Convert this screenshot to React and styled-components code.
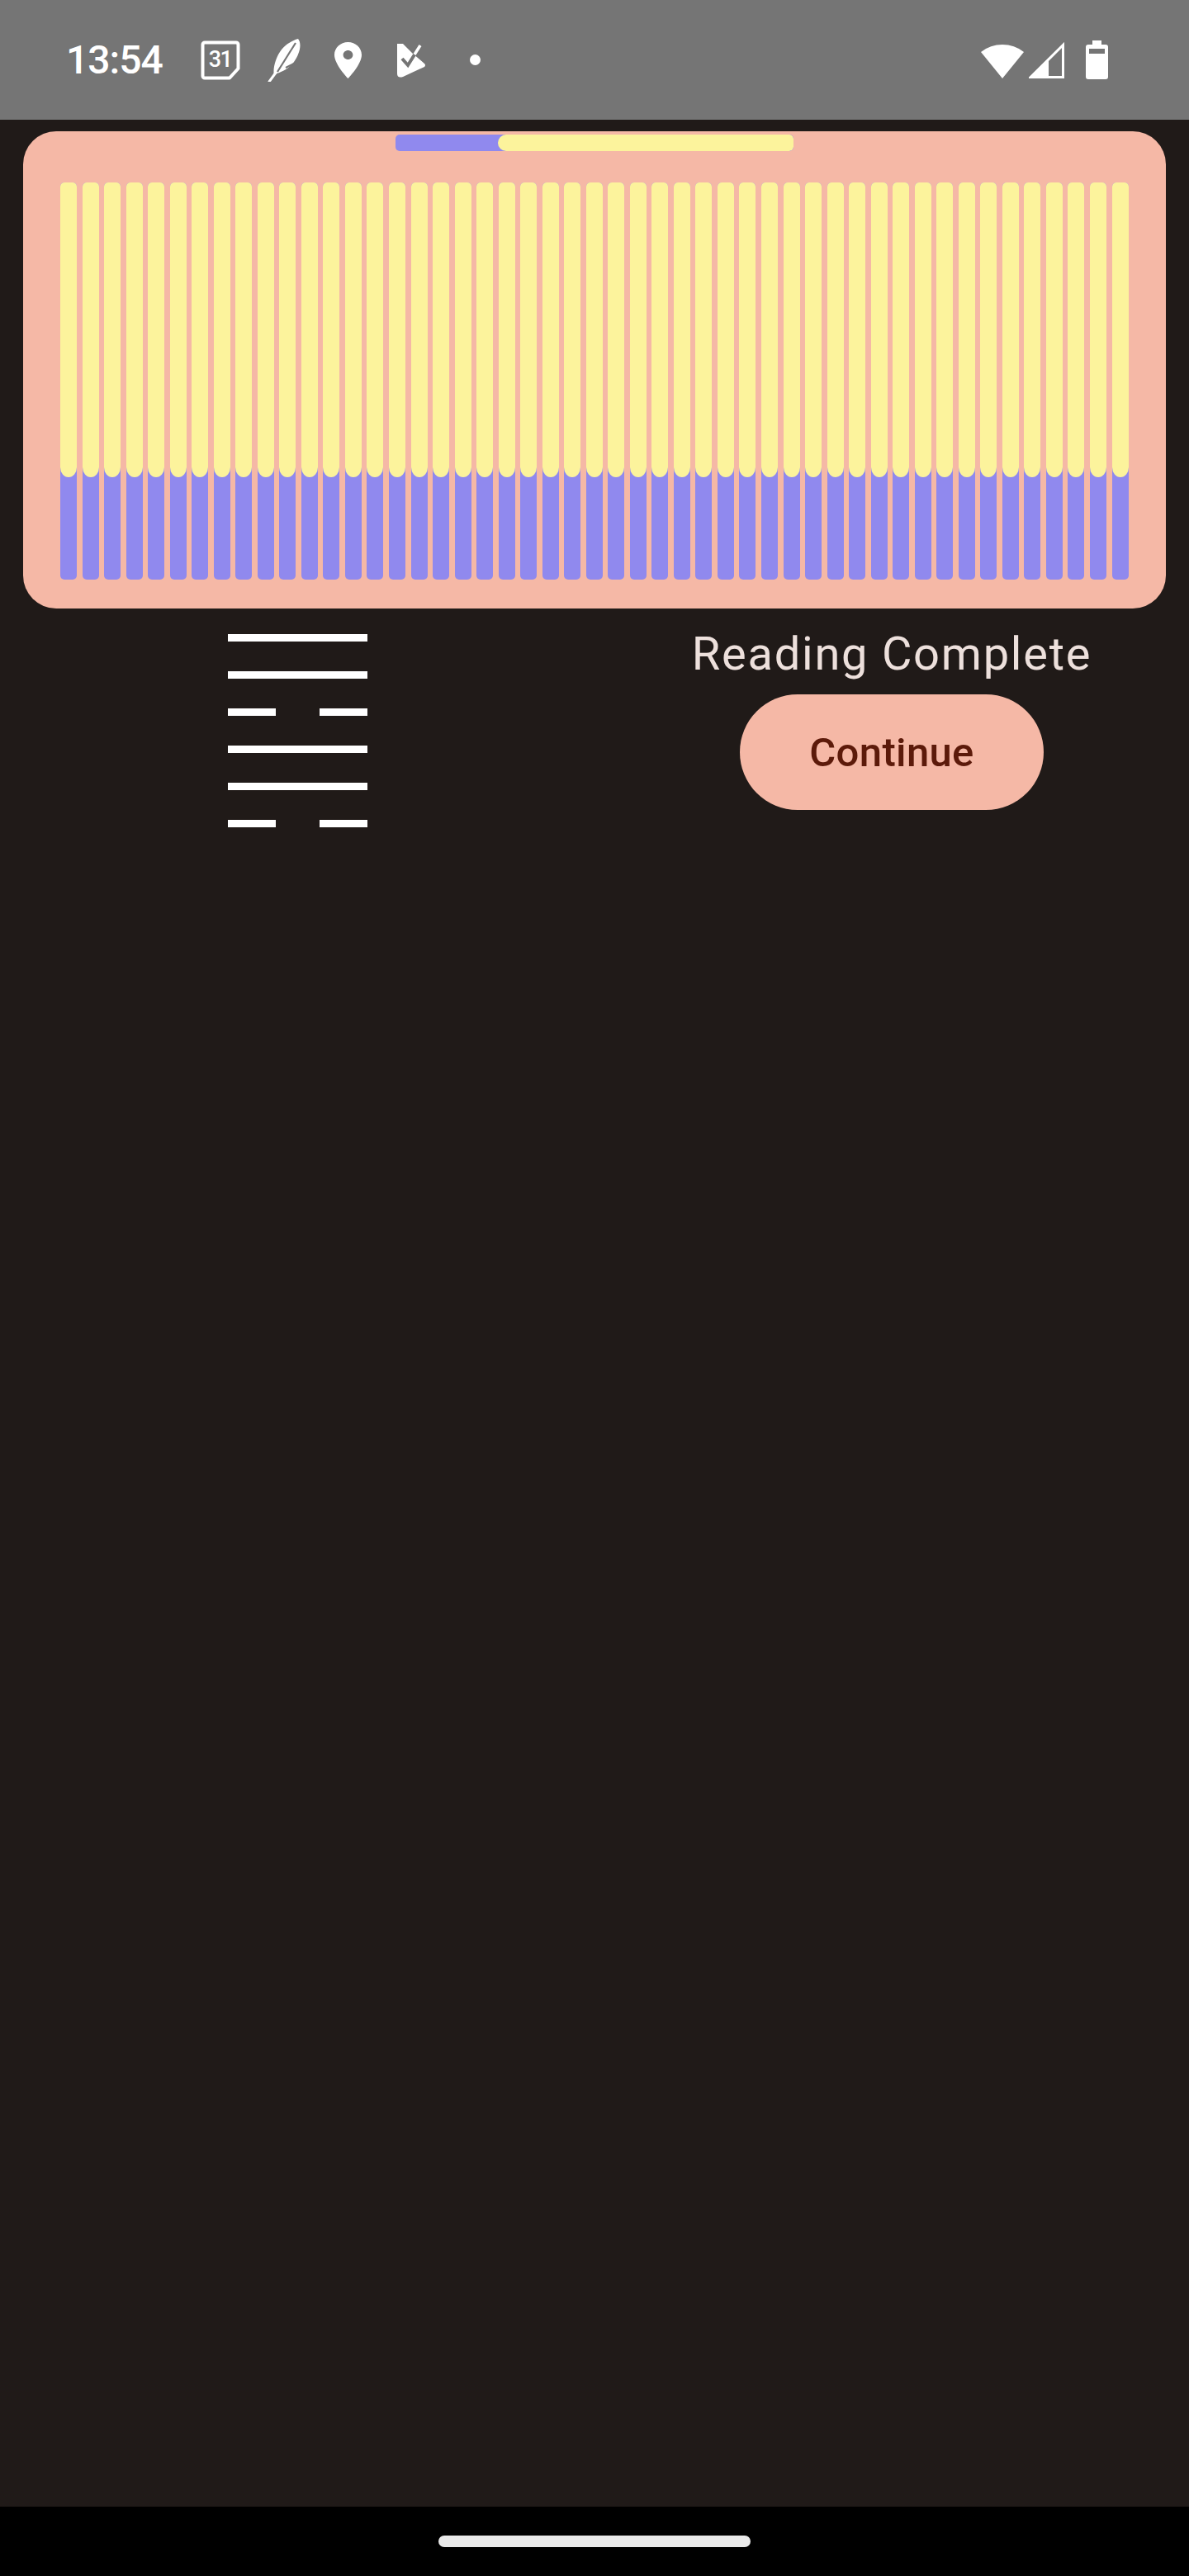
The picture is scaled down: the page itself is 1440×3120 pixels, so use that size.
import React from "react";
import styled, { createGlobalStyle } from "styled-components";

const colors = {
  statusBg: "#757575",
  page: "#201A18",
  card: "#F5B8A6",
  yellow: "#FCF39C",
  purple: "#9089EE",
  onSurface: "#EDE0DC",
  onPrimary: "#5C1A0A",
};

const GlobalStyle = createGlobalStyle`
  html, body {
    margin: 0;
    padding: 0;
    background: ${colors.page};
    font-family: Roboto, "Liberation Sans", sans-serif;
  }
  * {
    box-sizing: border-box;
  }
`;

const Screen = styled.div`
  display: flex;
  flex-direction: column;
  min-height: 100vh;
  background: ${colors.page};
`;

/* ---------- status bar ---------- */

const StatusBar = styled.div`
  display: flex;
  align-items: center;
  justify-content: space-between;
  height: 145px;
  padding: 0 98px 0 80px;
  background: ${colors.statusBg};
  color: #fff;
`;

const StatusLeft = styled.div`
  display: flex;
  align-items: center;
`;

const Clock = styled.span`
  font-size: 48px;
  font-weight: 500;
  line-height: 1;
  margin-right: 32px;
  letter-spacing: -1px;
`;

const NotifSlot = styled.div`
  display: flex;
  align-items: center;
  justify-content: center;
  width: 77px;
`;

const Dot = styled.span`
  width: 13px;
  height: 13px;
  border-radius: 50%;
  background: #fff;
`;

const StatusRight = styled.div`
  display: flex;
  align-items: center;
  gap: ${({ $gap }) => $gap || 0}px;
`;

const CalendarIcon = () => (
  <svg width="48" height="48" viewBox="0 0 48 48">
    <path
      d="M5 2.5 H43 a2.5 2.5 0 0 1 2.5 2.5 V34 L35 45.5 H5 a2.5 2.5 0 0 1 -2.5 -2.5 V5 a2.5 2.5 0 0 1 2.5 -2.5 Z"
      fill="none"
      stroke="#fff"
      strokeWidth="4"
      strokeLinejoin="round"
    />
    <text
      x="23.5"
      y="32"
      textAnchor="middle"
      fill="#fff"
      fontSize="27"
      fontWeight="500"
      fontFamily="Roboto, sans-serif"
      letterSpacing="-1.5"
    >
      31
    </text>
  </svg>
);

const FeatherIcon = () => (
  <svg width="42" height="52" viewBox="0 0 42 52">
    <path
      d="M38 0 C43 6 40 18 33 28 C27 36 19 40 12 42 L9 45 C7 36 11 22 18 13 C24 6 31 2 38 0 Z"
      fill="#fff"
    />
    <path d="M35 5 L13 40" stroke={colors.statusBg} strokeWidth="2.2" />
    <path d="M23 35 L33 30" stroke={colors.statusBg} strokeWidth="2" />
    <path d="M11 41 L3 52" stroke="#fff" strokeWidth="3" strokeLinecap="round" />
  </svg>
);

const PinIcon = () => (
  <svg width="33" height="44" viewBox="5 2 14 20" preserveAspectRatio="none">
    <path
      d="M12 2C8.13 2 5 5.13 5 9c0 5.25 7 13 7 13s7-7.75 7-13c0-3.87-3.13-7-7-7zm0 9.5c-1.38 0-2.5-1.12-2.5-2.5s1.12-2.5 2.5-2.5 2.5 1.12 2.5 2.5-1.12 2.5-2.5 2.5z"
      fill="#fff"
    />
  </svg>
);

const TaskIcon = () => (
  <svg width="40" height="44" viewBox="0 0 40 44">
    <path
      d="M3 2 H10 L22 14 L36 26 Q38 28 36 30 L10 42 Q3 44 3 38 Z"
      fill="#fff"
    />
    <path
      d="M9 20 L16 28 L31 4"
      fill="none"
      stroke={colors.statusBg}
      strokeWidth="4"
    />
    <path d="M24 15 L31 4" stroke="#fff" strokeWidth="3.5" />
  </svg>
);

const WifiIcon = () => (
  <svg width="54" height="44" viewBox="0 0 54 44">
    <path d="M1 12 A42 42 0 0 1 53 12 L27 44 Z" fill="#fff" />
  </svg>
);

const SignalIcon = () => (
  <svg width="43" height="44" viewBox="0 0 43 44">
    <path d="M0 44 L24 44 L24 19.4 Z" fill="#fff" />
    <path
      d="M2 42.6 L41.5 42.6 L41.5 3.5 Z"
      fill="none"
      stroke="#fff"
      strokeWidth="3"
    />
  </svg>
);

const BatteryIcon = () => (
  <svg width="27" height="47" viewBox="0 0 27 47">
    <rect x="8" y="0" width="11" height="6" fill="#fff" />
    <rect x="0" y="5" width="27" height="42" rx="3" fill="#fff" />
    <rect x="4" y="10" width="19" height="6" fill={colors.statusBg} />
  </svg>
);

/* ---------- main content ---------- */

const Content = styled.main`
  flex: 1;
  display: flex;
  flex-direction: column;
`;

const Card = styled.section`
  display: flex;
  flex-direction: column;
  align-items: center;
  margin: 14px 28px 0;
  padding: 4px 45px 35px;
  background: ${colors.card};
  border-radius: 40px;
`;

const ProgressTrack = styled.div`
  display: flex;
  justify-content: flex-end;
  width: 482px;
  height: 20px;
  background: ${colors.purple};
  border-radius: 5px;
  overflow: hidden;
`;

const ProgressRemain = styled.div`
  height: 100%;
  background: ${colors.yellow};
  border-radius: 10px 5px 5px 10px;
`;

const BarRow = styled.div`
  display: flex;
  justify-content: space-between;
  width: 100%;
  margin-top: 38px;
`;

const BarTrack = styled.div`
  width: 20px;
  height: 481px;
  background: ${colors.purple};
  border-radius: 5px;
  overflow: hidden;
`;

const BarRemain = styled.div`
  height: ${({ $h }) => $h}px;
  background: ${colors.yellow};
  border-radius: 0 0 10px 10px / 0 0 12px 12px;
`;

const ResultRow = styled.div`
  display: grid;
  grid-template-columns: 1fr 1fr;
  padding-top: 13px;
`;

const HexColumn = styled.div`
  display: flex;
  justify-content: center;
  padding-top: 18px;
`;

const Hexagram = styled.div`
  display: flex;
  flex-direction: column;
  gap: 36px;
  width: 169px;
`;

const HexLine = styled.div`
  display: flex;
  justify-content: space-between;
  height: 9px;
`;

const HexSegment = styled.span`
  width: ${({ $broken }) => ($broken ? "58px" : "100%")};
  height: 100%;
  background: #fff;
`;

const ActionColumn = styled.div`
  display: flex;
  flex-direction: column;
  align-items: center;
`;

const Title = styled.h2`
  margin: 0;
  font-size: 56px;
  font-weight: 400;
  line-height: 84px;
  letter-spacing: 1.75px;
  color: ${colors.onSurface};
`;

const ContinueButton = styled.button`
  height: 140px;
  margin-top: 7px;
  padding: 0 84px;
  border: none;
  border-radius: 70px;
  background: ${colors.card};
  color: ${colors.onPrimary};
  font-family: Roboto, "Liberation Sans", sans-serif;
  font-size: 49px;
  font-weight: 500;
  letter-spacing: 0.35px;
  cursor: pointer;
`;

/* ---------- nav bar ---------- */

const NavBar = styled.div`
  display: flex;
  align-items: center;
  justify-content: center;
  height: 84px;
  background: #000;
`;

const HomeHandle = styled.span`
  width: 378px;
  height: 14px;
  border-radius: 7px;
  background: #eaeaea;
`;

const BAR_COUNT = 49;
const hexagram = [false, false, true, false, false, true];

const App = () => {
  return (
    <Screen>
      <GlobalStyle />
      <StatusBar>
        <StatusLeft>
          <Clock>13:54</Clock>
          <NotifSlot>
            <CalendarIcon />
          </NotifSlot>
          <NotifSlot>
            <FeatherIcon />
          </NotifSlot>
          <NotifSlot>
            <PinIcon />
          </NotifSlot>
          <NotifSlot>
            <TaskIcon />
          </NotifSlot>
          <NotifSlot>
            <Dot />
          </NotifSlot>
        </StatusLeft>
        <StatusRight>
          <StatusRight $gap={5}>
            <WifiIcon />
            <SignalIcon />
          </StatusRight>
          <StatusRight style={{ marginLeft: 26 }}>
            <BatteryIcon />
          </StatusRight>
        </StatusRight>
      </StatusBar>

      <Content>
        <Card>
          <ProgressTrack>
            <ProgressRemain style={{ width: "74.3%" }} />
          </ProgressTrack>
          <BarRow>
            {Array.from({ length: BAR_COUNT }, (_, i) => (
              <BarTrack key={i}>
                <BarRemain $h={357} />
              </BarTrack>
            ))}
          </BarRow>
        </Card>

        <ResultRow>
          <HexColumn>
            <Hexagram>
              {hexagram.map((broken, i) => (
                <HexLine key={i}>
                  {broken ? (
                    <>
                      <HexSegment $broken />
                      <HexSegment $broken />
                    </>
                  ) : (
                    <HexSegment />
                  )}
                </HexLine>
              ))}
            </Hexagram>
          </HexColumn>
          <ActionColumn>
            <Title>Reading Complete</Title>
            <ContinueButton type="button">Continue</ContinueButton>
          </ActionColumn>
        </ResultRow>
      </Content>

      <NavBar>
        <HomeHandle />
      </NavBar>
    </Screen>
  );
};

export default App;
